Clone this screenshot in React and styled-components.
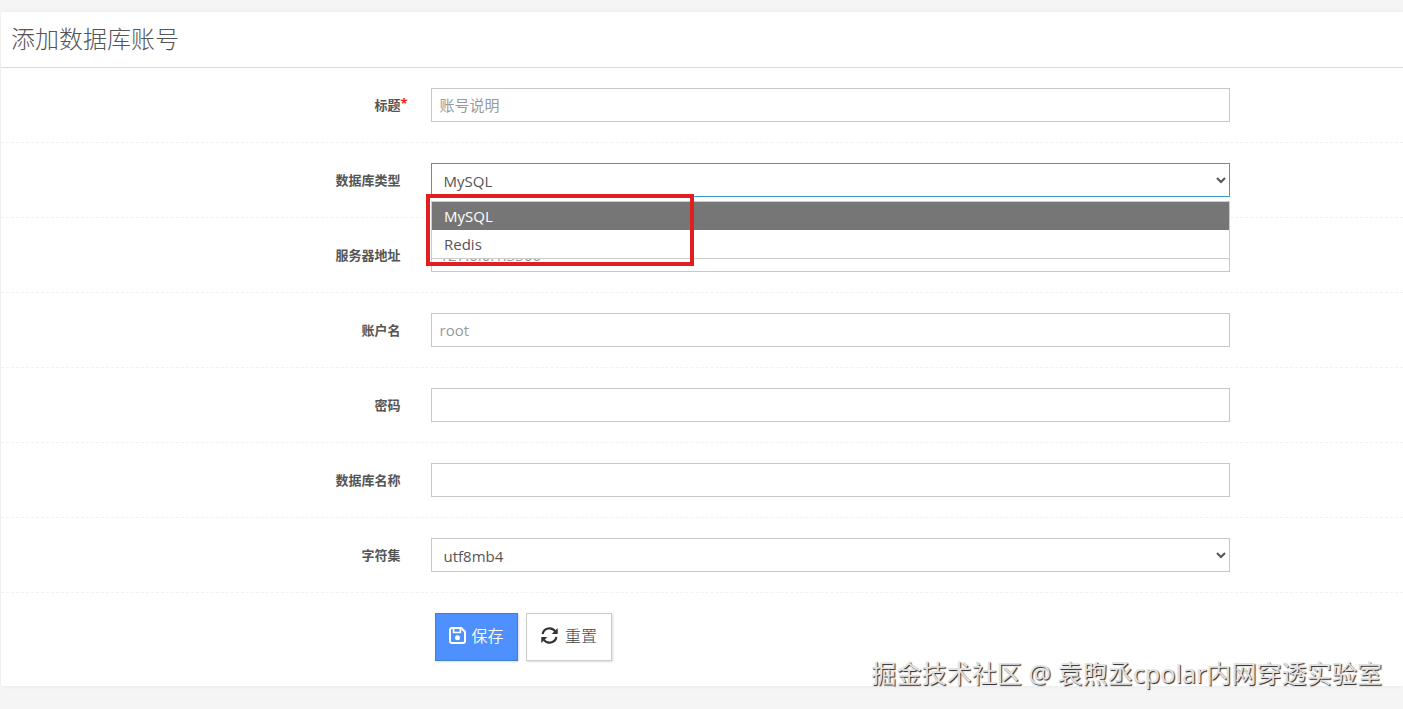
import React from 'react'
import styled, { createGlobalStyle, css } from 'styled-components'

const GlobalStyle = createGlobalStyle`
  * {
    box-sizing: border-box;
  }
  html, body {
    margin: 0;
    overflow: hidden;
  }
  body {
    background: #f5f5f5;
    color: #555;
    font-family: 'Open Sans', 'Noto Sans CJK SC', sans-serif;
    font-size: 15px;
  }
`;

const Page = styled.div`
  position: relative;
  height: 709px;
  padding: 12px 0 0 1px;
`;

const Card = styled.section`
  height: 674px;
  background: #fff;
  border-radius: 2px 0 0 2px;
  box-shadow: 0 0 5px rgba(0, 0, 0, 0.06);
`;

const CardHeader = styled.header`
  height: 56px;
  padding: 0 10px;
  border-bottom: 1px solid #d8dad9;
`;

const Title = styled.h2`
  margin: 0;
  font-size: 24px;
  font-weight: 300;
  line-height: 54px;
  color: #555;
`;

const Row = styled.div`
  display: flex;
  align-items: flex-start;
  height: 75px;
  padding-top: 20px;
  border-bottom: 1px dashed #f2f2f2;
`;

const Label = styled.label`
  width: 399.5px;
  flex: none;
  text-align: right;
  font-size: 13px;
  font-weight: 700;
  line-height: 34px;
  color: #555;
  position: relative;
`;

const Required = styled.span`
  position: absolute;
  top: -2px;
  left: 100%;
  color: #f01a1a;
`;

const Field = styled.div`
  position: relative;
  width: 799px;
  margin-left: 30.5px;
`;

const control = css`
  display: block;
  width: 100%;
  height: 34px;
  margin: 0;
  border: 1px solid #c5c7c9;
  border-radius: 0;
  outline: none;
  background: #fff;
  color: #555;
  font-family: inherit;
  font-size: 15px;
`;

const Input = styled.input`
  ${control}
  padding: 0 8px 1px 7.5px;
  &::placeholder {
    color: #999;
    opacity: 1;
  }
`;

const Select = styled.select`
  ${control}
  padding: 2px 0 0 7.5px;
  border-color: ${props => props.$active ? '#3c9bcb' : '#c5c7c9'};
`;

const Options = styled.ul`
  position: absolute;
  z-index: 2;
  top: 38px;
  left: 0;
  width: 799px;
  margin: 0;
  padding: 0;
  list-style: none;
  background: #fff;
  border: 1px solid #ccc;
`;

const Option = styled.li`
  height: 28px;
  padding-left: 12px;
  line-height: 29px;
  color: ${props => props.$selected ? '#fff' : '#555'};
  background: ${props => props.$selected ? '#767676' : '#fff'};
`;

// red frame drawn over the open list
const Highlight = styled.div`
  position: absolute;
  z-index: 3;
  top: 31px;
  left: -5px;
  width: 268px;
  height: 72px;
  border: 4px solid #e02020;
`;

const Actions = styled.div`
  display: flex;
  gap: 8px;
  padding: 20px 0 0 434px;
`;

const Button = styled.button`
  display: flex;
  align-items: center;
  justify-content: center;
  gap: ${props => props.$primary ? '5px' : '7px'};
  width: ${props => props.$primary ? '83px' : '86px'};
  height: 48px;
  padding: 0 0 4px;
  border: 1px solid ${props => props.$primary ? '#3f7fd0' : '#ccc'};
  box-shadow: 1px 1px 2px rgba(0, 0, 0, 0.15);
  background: ${props => props.$primary ? '#4d90fe' : '#fff'};
  color: ${props => props.$primary ? '#fff' : '#444'};
  font-family: 'Noto Sans CJK SC', sans-serif;
  font-size: 16px;
  font-weight: ${props => props.$primary ? 350 : 300};
  svg {
    width: 17px;
    height: 17px;
    flex: none;
    color: ${props => props.$primary ? '#fff' : '#333'};
  }
`;

const Watermark = styled.div`
  position: absolute;
  top: 655px;
  right: 21px;
  color: #e2e2e2;
  font-family: 'Noto Sans', 'Noto Sans CJK SC', sans-serif;
  font-size: 25.1px;
  line-height: 37px;
  white-space: nowrap;
  text-shadow: 1px 1px 1px #222;
`;

function SaveIcon() {
  return (
    <svg viewBox="0 0 17 17" fill="none" stroke="currentColor" strokeWidth="2" strokeLinejoin="round">
      <path d="M3 1h9.2L16 4.8V14a2 2 0 0 1-2 2H3a2 2 0 0 1-2-2V3a2 2 0 0 1 2-2z" />
      <path d="M4.6 1.5v4h6.8v-4" strokeWidth="1.7" />
      <circle cx="8.5" cy="10.7" r="2.5" fill="currentColor" stroke="none" />
    </svg>
  )
}

function RefreshIcon() {
  return (
    <svg viewBox="0 0 17 17" fill="none" stroke="currentColor" strokeWidth="2.2">
      <path d="M1.600 7A7 7 0 0 1 14.300 4.500M15.400 10A7 7 0 0 1 2.700 12.500" />
      <path d="M16.700 1v6h-6zM.3 16v-6h6z" fill="currentColor" stroke="none" />
    </svg>
  )
}

function FormRow({ label, required, children }) {
  return (
    <Row>
      <Label>
        {label}
        {required && <Required>*</Required>}
      </Label>
      <Field>{children}</Field>
    </Row>
  )
}

function App() {
  return (
    <Page>
      <GlobalStyle />
      <Card>
        <CardHeader>
          <Title>添加数据库账号</Title>
        </CardHeader>
        <FormRow label="标题" required>
          <Input placeholder="账号说明" />
        </FormRow>
        <FormRow label="数据库类型">
          <Select $active defaultValue="MySQL">
            <option>MySQL</option>
            <option>Redis</option>
          </Select>
          <Options>
            <Option $selected>MySQL</Option>
            <Option>Redis</Option>
          </Options>
          <Highlight />
        </FormRow>
        <FormRow label="服务器地址">
          <Input placeholder="127.0.0.1:3306" />
        </FormRow>
        <FormRow label="账户名">
          <Input placeholder="root" />
        </FormRow>
        <FormRow label="密码">
          <Input type="password" />
        </FormRow>
        <FormRow label="数据库名称">
          <Input />
        </FormRow>
        <FormRow label="字符集">
          <Select defaultValue="utf8mb4">
            <option>utf8mb4</option>
          </Select>
        </FormRow>
        <Actions>
          <Button $primary>
            <SaveIcon />
            保存
          </Button>
          <Button>
            <RefreshIcon />
            重置
          </Button>
        </Actions>
      </Card>
      <Watermark>掘金技术社区 @ 袁煦丞cpolar内网穿透实验室</Watermark>
    </Page>
  )
}

export default App
